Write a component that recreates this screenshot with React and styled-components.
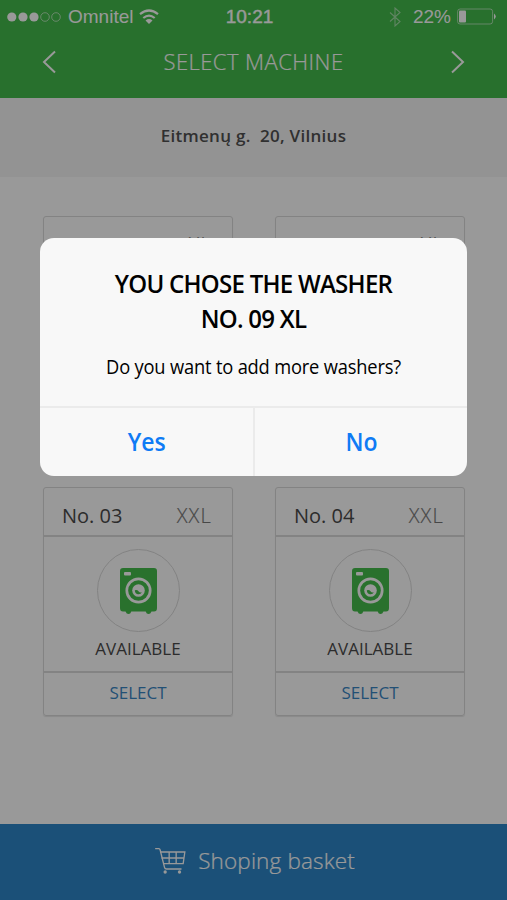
import React from 'react';
import styled, { createGlobalStyle } from 'styled-components';

const sans = `"Open Sans", "Noto Sans", sans-serif`;

const GlobalStyle = createGlobalStyle`
  * { box-sizing: border-box; }
  body { margin: 0; background: #999; }
  button { border: 0; padding: 0; margin: 0; background: none; color: inherit; font: inherit; }
`;

const Phone = styled.div`
  position: relative;
  width: 507px;
  height: 900px;
  overflow: hidden;
  display: flex;
  flex-direction: column;
  background: #fff;
  font-family: ${sans};
`;

const Header = styled.header`
  height: 98px;
  flex: none;
  background: #43bb4b;
  color: #fff;
`;

const StatusBar = styled.div`
  height: 34px;
  display: grid;
  grid-template-columns: 1fr auto 1fr;
  align-items: center;
  padding: 0 10px 0 7px;
  font: 19px/34px "Liberation Sans", Arial, sans-serif;
`;

const StatusGroup = styled.div`
  display: flex;
  align-items: center;
  justify-content: ${(p) => (p.$end ? 'flex-end' : 'flex-start')};
  gap: ${(p) => p.$gap}px;
`;

const Clock = styled.span`
  margin: 0 4px 0 -1px;
  -webkit-text-stroke: 0.4px currentColor;
`;

const NavBar = styled.nav`
  height: 56px;
  display: flex;
  align-items: center;
  justify-content: space-between;
  padding: 0 41px;
`;

const NavButton = styled.button`
  display: flex;
`;

const NavTitle = styled.h1`
  margin: 0;
  padding-bottom: 2px;
  font-size: 22px;
  font-weight: 300;
  letter-spacing: 0.45px;
  -webkit-text-stroke: 0.2px currentColor;
`;

const Address = styled.div`
  height: 79px;
  flex: none;
  display: flex;
  align-items: center;
  justify-content: center;
  padding-bottom: 4px;
  background: #f5f5f5;
  color: #505050;
  font-size: 17px;
  font-weight: 600;
  letter-spacing: 0.28px;
  white-space: pre;
`;

const Machines = styled.main`
  flex: 1;
  display: grid;
  grid-template-columns: 190px 190px;
  grid-auto-rows: 229px;
  gap: 42px;
  padding: 39px 42px 0 43px;
`;

const Card = styled.article`
  display: flex;
  flex-direction: column;
  border: 1px solid #dadada;
  border-radius: 3px;
  box-shadow: 0 1px 1px rgba(0, 0, 0, 0.1);
  color: #4a4a4a;
`;

const CardHead = styled.div`
  height: 49px;
  display: flex;
  align-items: center;
  justify-content: space-between;
  padding: 8px 20px 0 18px;
  border-bottom: 2px solid #dadada;
  font-size: 20px;
`;

const Size = styled.span`
  font-weight: 300;
  letter-spacing: 1.2px;
  color: #777;
  -webkit-text-stroke: 0.2px currentColor;
`;

const CardBody = styled.div`
  flex: 1;
  display: flex;
  flex-direction: column;
  align-items: center;
  padding-top: 12px;
  font-size: 17px;
  line-height: 24px;
`;

const MachineBadge = styled.div`
  width: 83px;
  height: 83px;
  display: flex;
  align-items: center;
  justify-content: center;
  margin-bottom: 5px;
  border: 1px solid #dadada;
  border-radius: 50%;
`;

const SelectButton = styled.button`
  height: 44px;
  padding-bottom: 4px;
  border-top: 2px solid #dadada;
  color: #3a86c4;
  font-size: 17px;
`;

const Basket = styled.footer`
  height: 76px;
  flex: none;
  display: flex;
  align-items: center;
  justify-content: center;
  gap: 12px;
  padding: 0 0 3px 3px;
  background: #2d86c8;
  color: #fff;
  font-size: 22.5px;
  font-weight: 300;
  letter-spacing: 0.15px;
  -webkit-text-stroke: 0.2px currentColor;
`;

const Overlay = styled.div`
  position: absolute;
  inset: 0;
  padding: 238px 40px 0;
  background: rgba(0, 0, 0, 0.4);
`;

const Dialog = styled.section`
  height: 238px;
  display: flex;
  flex-direction: column;
  overflow: hidden;
  border-radius: 14px;
  background: #f8f8f8;
  color: #000;
  text-align: center;
`;

const DialogBody = styled.div`
  height: 168px;
  padding-top: 28px;
`;

const DialogTitle = styled.h2`
  margin: 0;
  font-size: 26px;
  line-height: 35px;
  font-weight: 600;
  letter-spacing: -0.8px;
  transform: scaleX(0.924);
`;

const Question = styled.p`
  margin: 18px 0 0;
  font-size: 20px;
  line-height: 26px;
  letter-spacing: -0.2px;
  white-space: nowrap;
  transform: scaleX(0.915);
`;

const DialogActions = styled.div`
  flex: 1;
  display: grid;
  grid-template-columns: 213px 1fr;
  border-top: 2px solid #ebebeb;
`;

const DialogButton = styled.button`
  padding-bottom: 2px;
  color: #0f7bf5;
  font-size: 25px;
  font-weight: 600;
  & + & { border-left: 2px solid #ebebeb; }
`;

const Condensed = styled.span`
  display: inline-block;
  transform: scaleX(0.92);
`;

const Signal = () => (
  <svg width="55" height="12" viewBox="0 0 55 12" fill="none" stroke="#fff">
    {[4.8, 16, 27].map((x) => <circle key={x} cx={x} cy="6" r="4.6" fill="#fff" stroke="none" />)}
    {[38, 49].map((x) => <circle key={x} cx={x} cy="6" r="4.3" strokeWidth=".8" opacity=".7" />)}
  </svg>
);

const Wifi = () => (
  <svg width="20" height="16" viewBox="0 0 20 16" fill="none" stroke="#fff" strokeWidth="2.2">
    <path d="M1 5.2Q10-2.2 19 5.2M4.3 9Q10 4.2 15.7 9" />
    <path d="M6.5 11.5Q10 8.6 13.5 11.5L10 15Z" fill="#fff" stroke="none" />
  </svg>
);

const Bluetooth = () => (
  <svg width="12" height="20" viewBox="0 0 12 20" fill="none" stroke="#fff" strokeWidth="1.1" opacity=".5">
    <path d="M1 5.5L11 14.5L6 19V1L11 5.5L1 14.5" />
  </svg>
);

const Battery = () => (
  <svg width="40" height="18" viewBox="0 0 40 18" fill="none">
    <rect x=".6" y="1" width="35" height="15" rx="2.5" stroke="#fff" opacity=".55" />
    <rect x="2" y="2.4" width="7" height="12.2" rx="1" fill="#fff" />
    <path d="M37 5.5Q40.5 8.5 37 11.5Z" fill="#fff" />
  </svg>
);

const Chevron = ({ right }) => (
  <svg width="16" height="24" viewBox="0 0 16 24" fill="none" stroke="#fff" strokeWidth="2">
    <path d={right ? 'M2 1.5L13 12L2 22.5' : 'M14 1.5L3 12L14 22.5'} />
  </svg>
);

const Washer = () => (
  <svg width="37" height="46" viewBox="0 0 37 46">
    <path d="M3 0H34Q37 0 37 3V40Q37 43.5 34 43.5H31.5Q30.5 46 28.5 46T25.7 43.5H11.3Q10.5 46 8.5 46T5.5 43.5H3Q0 43.5 0 40V3Q0 0 3 0Z" fill="#45bd4b" />
    <rect x="4" y="4" width="7" height="3.6" rx="1" fill="#fff" />
    <circle cx="18.5" cy="22.5" r="11.7" fill="none" stroke="#fff" strokeWidth="2.7" />
    <circle cx="18.5" cy="22.5" r="6.3" fill="#fff" />
    <path d="M14.8 22.2Q17.2 21.3 18.5 23.2T22 24.2Q20.4 26.9 17.7 26.2T14.8 22.2Z" fill="#45bd4b" />
  </svg>
);

const Cart = () => (
  <svg width="31" height="26" viewBox="46 100 92 78" fill="none" stroke="#fff" strokeWidth="4">
    <path d="M46 102H57Q60 102 61 106L74 158Q75 163 80 163H125" />
    <path d="M61 112H135L130 147H70M65 130H132M88 112V147M109 112V147" strokeWidth="4" />
    <circle cx="76" cy="172" r="5" fill="#fff" stroke="none" />
    <circle cx="119" cy="172" r="5" fill="#fff" stroke="none" />
  </svg>
);

const machines = [
  { no: '01', size: 'XL' },
  { no: '02', size: 'XL' },
  { no: '03', size: 'XXL' },
  { no: '04', size: 'XXL' },
];

const MachineCard = ({ no, size }) => (
  <Card>
    <CardHead>
      <span>No. {no}</span>
      <Size>{size}</Size>
    </CardHead>
    <CardBody>
      <MachineBadge><Washer /></MachineBadge>
      AVAILABLE
    </CardBody>
    <SelectButton>SELECT</SelectButton>
  </Card>
);

export default function App() {
  return (
    <Phone>
      <GlobalStyle />
      <Header>
        <StatusBar>
          <StatusGroup $gap={6}>
            <Signal />
            <span>Omnitel</span>
            <Wifi />
          </StatusGroup>
          <Clock>10:21</Clock>
          <StatusGroup $end $gap={6}>
            <StatusGroup $gap={12}>
              <Bluetooth />
              <span>22%</span>
            </StatusGroup>
            <Battery />
          </StatusGroup>
        </StatusBar>
        <NavBar>
          <NavButton aria-label="Back"><Chevron /></NavButton>
          <NavTitle>SELECT MACHINE</NavTitle>
          <NavButton aria-label="Next"><Chevron right /></NavButton>
        </NavBar>
      </Header>
      <Address>{'Eitmenų g.  20, Vilnius'}</Address>
      <Machines>
        {machines.map((m) => <MachineCard key={m.no} {...m} />)}
      </Machines>
      <Basket>
        <Cart />
        <span>Shoping basket</span>
      </Basket>
      <Overlay>
        <Dialog role="dialog">
          <DialogBody>
            <DialogTitle>YOU CHOSE THE WASHER<br />NO. 09 XL</DialogTitle>
            <Question>Do you want to add more washers?</Question>
          </DialogBody>
          <DialogActions>
            <DialogButton><Condensed>Yes</Condensed></DialogButton>
            <DialogButton><Condensed>No</Condensed></DialogButton>
          </DialogActions>
        </Dialog>
      </Overlay>
    </Phone>
  );
}
